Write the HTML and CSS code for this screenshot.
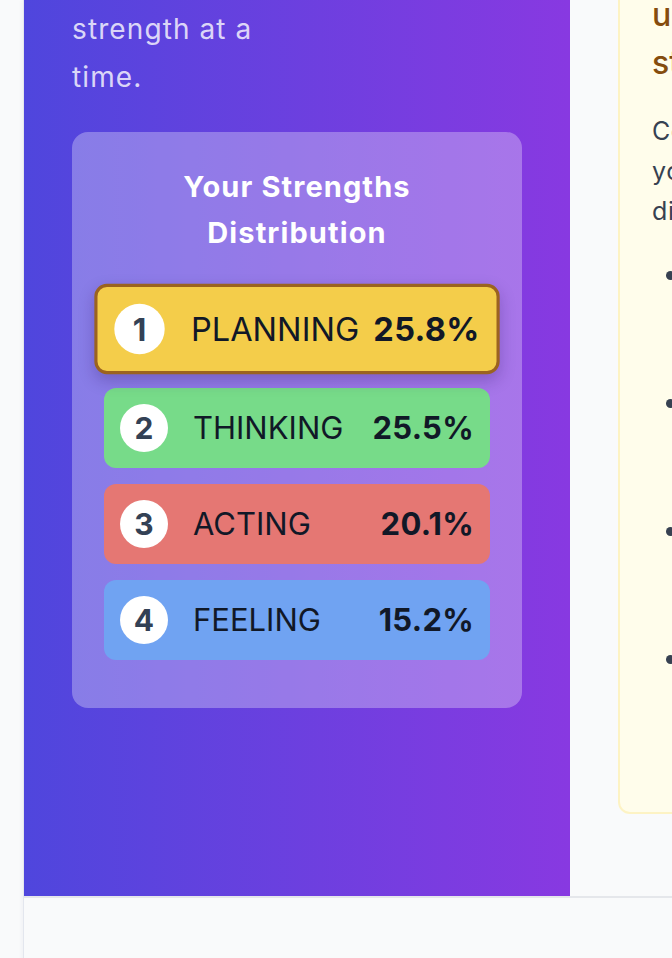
FILE: index.html
```html
<!DOCTYPE html>
<html lang="en">
<head>
<meta charset="utf-8">
<title>Your Strengths Distribution</title>
<link rel="stylesheet" href="styles.css">
</head>
<body>
<div class="page">
  <div class="frame">
    <div class="main">
      <section class="panel">
        <p class="lead">strength at a time.</p>
        <div class="dist">
          <h2 class="dist-title">Your Strengths Distribution</h2>
          <ol class="ranks">
            <li class="rank rank--top rank--yellow"><span class="badge">1</span><span class="name">PLANNING</span><span class="pct">25.8%</span></li>
            <li class="rank rank--green"><span class="badge">2</span><span class="name">THINKING</span><span class="pct">25.5%</span></li>
            <li class="rank rank--red"><span class="badge">3</span><span class="name">ACTING</span><span class="pct">20.1%</span></li>
            <li class="rank rank--blue"><span class="badge">4</span><span class="name">FEELING</span><span class="pct">15.2%</span></li>
          </ol>
        </div>
      </section>
      <section class="side">
        <div class="tips">
          <h3 class="tips-title">using your<br>strengths every day</h3>
          <p class="tips-text">Consider how your top strengths<br>you rely on most shape your<br>distribution and daily choices.</p>
          <ul class="tips-list">
            <li><span>Lean on your planning strength<br>to organise goals and set clear<br>milestones for each week.</span></li>
            <li><span>Use your thinking strength to<br>reflect on problems before you<br>decide how to act on them.</span></li>
            <li><span>Channel your acting strength<br>into momentum when a plan<br>needs a decisive first step.</span></li>
            <li><span>Grow your feeling strength by<br>listening closely and checking<br>in with the people around you.</span></li>
          </ul>
        </div>
      </section>
    </div>
    <footer class="foot"></footer>
  </div>
</div>
</body>
</html>
```

FILE: styles.css
```css
html, body {
  margin: 0;
  padding: 0;
}

body {
  background: #f9fafb;
  font-family: Inter, "Noto Sans", "Liberation Sans", sans-serif;
}

.page {
  width: 672px;
  height: 958px;
  overflow: hidden;
}

.frame {
  margin-left: 23px;
  width: 1200px;
  border-left: 1px solid #e3e6ee;
  background: #f9fafb;
  box-shadow: -1px 0 4px rgba(30, 41, 90, 0.05);
}

.main {
  display: flex;
}

.panel {
  flex: 0 0 546px;
  box-sizing: border-box;
  padding: 5px 48px 0;
  background: linear-gradient(to right, #4f46dd, #8839e1);
}

.lead {
  margin: 0 0 31px;
  max-width: 220px;
  font-size: 28px;
  line-height: 48px;
  letter-spacing: 1.1px;
  color: rgba(255, 255, 255, 0.8);
}

.dist {
  background: rgba(255, 255, 255, 0.3);
  border-radius: 16px;
  padding: 32px 32px 48px;
}

.dist-title {
  margin: 0 0 30px;
  text-align: center;
  color: #ffffff;
  font-size: 29px;
  line-height: 46px;
  letter-spacing: 1.1px;
  font-weight: 700;
}

.ranks {
  list-style: none;
  margin: 0;
  padding: 0;
  display: flex;
  flex-direction: column;
  gap: 16px;
}

.rank {
  display: flex;
  align-items: center;
  padding: 16px;
  border-radius: 12px;
  color: #111827;
  font-size: 31px;
  line-height: 40px;
}

.rank--top {
  border: 3px solid #9b6320;
  transform: scale(1.05);
  box-shadow: 0 6px 14px rgba(40, 20, 90, 0.25);
}

.rank--yellow { background: #f4cd4a; }
.rank--green { background: #77db89; }
.rank--red { background: #e57773; }
.rank--blue { background: #70a3f2; }

.badge {
  flex: 0 0 48px;
  height: 48px;
  margin-right: 25px;
  border-radius: 50%;
  background: #ffffff;
  display: flex;
  align-items: center;
  justify-content: center;
  font-size: 30px;
  font-weight: 700;
  color: #334155;
}

.name {
  flex: 1;
}

.pct {
  font-weight: 700;
  letter-spacing: 0.3px;
}

.side {
  flex: 0 0 auto;
  padding: 0 0 82px 48px;
}

.tips {
  width: 560px;
  margin-top: -9px;
  background: #fffdeb;
  border: 2px solid #fdf3c4;
  border-top: 0;
  border-radius: 0 0 12px 12px;
  padding: 0 32px 53px;
}

.tips-title {
  margin: 0 0 24px;
  font-size: 32px;
  line-height: 48px;
  font-weight: 500;
  color: #854d0e;
  white-space: nowrap;
}

.tips-text {
  margin: 0 0 24px;
  font-size: 25px;
  line-height: 40px;
  letter-spacing: 0.6px;
  color: #374151;
  white-space: nowrap;
}

.tips-list {
  list-style: none;
  margin: 0;
  padding: 0;
  display: flex;
  flex-direction: column;
  gap: 8px;
}

.tips-list li {
  display: flex;
  font-size: 24px;
  line-height: 40px;
  color: #374151;
  white-space: nowrap;
}

.tips-list li::before {
  content: "";
  flex: 0 0 9px;
  height: 9px;
  margin: 15.5px 14px 0 14px;
  border-radius: 50%;
  background: #374151;
}

.foot {
  height: 120px;
  border-top: 2px solid #e5e7eb;
  background: #f9fafb;
}
```
